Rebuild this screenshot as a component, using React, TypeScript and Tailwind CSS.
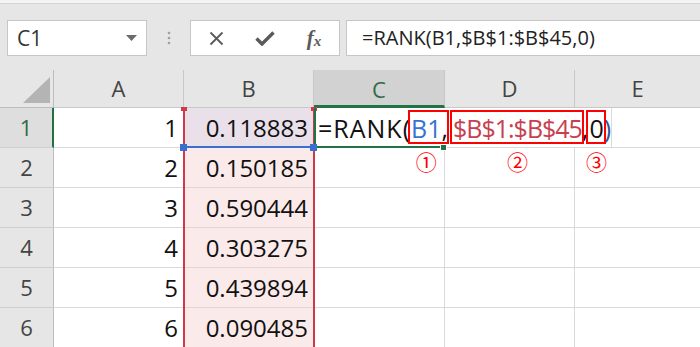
import React from "react";

const body = [
  { n: "2", a: "2", b: "0.150185" },
  { n: "3", a: "3", b: "0.590444" },
  { n: "4", a: "4", b: "0.303275" },
  { n: "5", a: "5", b: "0.439894" },
  { n: "6", a: "6", b: "0.090485" },
];

const Toolbar = () => (
  <div className="mt-[16px] flex h-[36px] items-stretch">
    <div className="ml-[7px] flex w-[140px] items-center justify-between border border-[#c6c6c6] bg-white pl-[9px] pr-[9px]">
      <span className="text-[21px] leading-none text-[#333]">C1</span>
      <svg width="11" height="6" viewBox="0 0 11 6">
        <path d="M0 0h11L5.5 6z" fill="#6b6b6b" />
      </svg>
    </div>
    <div className="flex w-[43px] items-center justify-center">
      <svg width="4" height="14" viewBox="0 0 4 14">
        <circle cx="2" cy="2" r="1.3" fill="#a0a0a0" />
        <circle cx="2" cy="7" r="1.3" fill="#a0a0a0" />
        <circle cx="2" cy="12" r="1.3" fill="#a0a0a0" />
      </svg>
    </div>
    <div className="flex w-[150px] items-center border border-[#c6c6c6] bg-white">
      <div className="flex w-[50px] justify-center">
        <svg width="15" height="15" viewBox="0 0 15 15">
          <path d="M1.5 1.5l12 12M13.5 1.5l-12 12" stroke="#5a5a5a" strokeWidth="1.8" />
        </svg>
      </div>
      <div className="flex w-[48px] justify-center">
        <svg width="20" height="16" viewBox="0 0 20 16">
          <path d="M1.5 8.5l5.5 5.5L18.5 2.5" stroke="#5a5a5a" strokeWidth="3.4" fill="none" />
        </svg>
      </div>
      <div className="flex w-[50px] items-end justify-center font-['Liberation_Serif',serif] italic font-bold text-[#5a5a5a]">
        <span className="text-[21px] leading-none">f</span>
        <span className="text-[15px] leading-none">x</span>
      </div>
    </div>
    <div className="ml-[6px] flex flex-1 items-center border border-r-0 border-[#c6c6c6] bg-white pl-[15px] text-[20px] text-[#222]">
      =RANK(B1,$B$1:$B$45,0)
    </div>
  </div>
);

const Ref = ({
  children,
  mark,
  cls,
  box,
}: {
  children: React.ReactNode;
  mark: string;
  cls: string;
  box: string;
}) => (
  <span className={`relative ${cls}`}>
    {children}
    <span className={`absolute -top-[1px] bottom-[1px] border-2 border-[#ff0000] ${box}`} />
    <span className="absolute left-1/2 top-[40px] -translate-x-1/2 font-['Noto_Sans_CJK_JP',sans-serif] text-[21px] leading-none tracking-normal text-[#ff0000]">
      {mark}
    </span>
  </span>
);

const Grid = () => (
  <div className="relative mt-[14px]">
    {/* column headers */}
    <div className="flex h-[38px] text-[22px] text-[#444]">
      <div className="flex w-[54px] items-end justify-end border-r border-b border-[#bdbdbd] pb-[4px] pr-[3px]">
        <svg width="27" height="26" viewBox="0 0 27 26">
          <path d="M27 0V26H0z" fill="#b4b4b4" />
        </svg>
      </div>
      <div className="flex w-[130px] items-center justify-center border-r border-b border-[#c8c8c8]">A</div>
      <div className="flex w-[130px] items-center justify-center border-r border-b border-[#c8c8c8]">B</div>
      <div className="flex w-[131px] items-center justify-center border-r border-[#c8c8c8] border-b-[3px] border-b-[#217346] bg-[#d2d2d2] pt-[3px] text-[#2e6b46]">
        C
      </div>
      <div className="flex w-[130px] items-center justify-center border-r border-b border-[#c8c8c8]">D</div>
      <div className="flex flex-1 items-center justify-center border-b border-[#c8c8c8]">E</div>
    </div>

    {/* row 1 */}
    <div className="flex h-[40px] text-[24px] text-[#111]">
      <div className="flex w-[54px] items-center justify-center border-r-2 border-r-[#217346] border-b border-b-[#cfcfcf] bg-[#dedede] text-[22px] text-[#2e6b46]">
        1
      </div>
      <div className="flex w-[130px] items-center justify-end border-r border-b border-[#d9d9d9] bg-white pr-[5px]">1</div>
      <div className="flex w-[130px] items-center justify-end border-r border-b border-[#d9d9d9] bg-[#e9e0ea] pr-[5px]">
        0.118883
      </div>
      <div className="flex w-[131px] items-center border-b border-[#d9d9d9] bg-white pl-[4px]">
        <span className="relative z-10 whitespace-nowrap text-[25px] leading-[32px]">
          <span className="tracking-[1px]">=RANK(</span>
          <Ref mark="①" cls="text-[#3a72d3]" box="-left-[3px] -right-[7px]">
            B1
          </Ref>
          ,
          <Ref mark="②" cls="ml-[5px] tracking-[-1px] text-[#c8404f]" box="-left-[3px] -right-[2px]">
            $B$1:$B$45
          </Ref>
          ,
          <Ref mark="③" cls="ml-[1px] text-[#111]" box="-left-[3px] -right-[2px]">
            0
          </Ref>
          <span className="text-[#2f5597]">)</span>
        </span>
      </div>
      <div className="w-[130px] border-b border-[#d9d9d9] bg-white" />
      <div className="flex flex-1 border-b border-[#d9d9d9] bg-white">
        <div className="w-[37px] border-r border-[#d9d9d9]" />
      </div>
    </div>

    {body.map((r) => (
      <div key={r.n} className="flex h-[40px] text-[24px] text-[#111]">
        <div className="flex w-[54px] items-center justify-center border-r border-b border-r-[#bdbdbd] border-b-[#cfcfcf] bg-[#e6e6e6] text-[22px] text-[#444]">
          {r.n}
        </div>
        <div className="flex w-[130px] items-center justify-end border-r border-b border-[#d9d9d9] bg-white pr-[5px]">
          {r.a}
        </div>
        <div className="flex w-[130px] items-center justify-end border-r border-b border-[#e4d4d4] bg-[#fbeaea] pr-[5px]">
          {r.b}
        </div>
        <div className="w-[131px] border-r border-b border-[#d9d9d9] bg-white" />
        <div className="w-[130px] border-r border-b border-[#d9d9d9] bg-white" />
        <div className="flex-1 border-b border-[#d9d9d9] bg-white" />
      </div>
    ))}

    {/* reference range B1:B45 (red) */}
    <div className="absolute left-[183px] top-[38px] bottom-0 w-[2px] bg-[#d0394a]" />
    <div className="absolute left-[313px] top-[38px] bottom-0 w-[2px] bg-[#d0394a]" />
    <div className="absolute left-[181px] top-[37px] h-[4px] w-[6px] bg-[#d0394a]" />
    <div className="absolute left-[311px] top-[37px] h-[4px] w-[6px] bg-[#d0394a]" />
    {/* reference B1 (blue) */}
    <div className="absolute left-[184px] top-[76px] h-[2px] w-[130px] bg-[#3a6fd0]" />
    {/* active cell C1 (green) */}
    <div className="absolute left-[314px] top-[38px] h-[40px] w-[2px] bg-[#217346]" />
    <div className="absolute left-[314px] top-[76px] h-[2px] w-[130px] bg-[#217346]" />
    <div className="absolute left-[440px] top-[74px] h-[7px] w-[7px] border border-white bg-[#217346]" />
    <div className="absolute left-[180px] top-[74px] h-[7px] w-[7px] bg-[#3a6fd0]" />
    <div className="absolute left-[310px] top-[74px] h-[7px] w-[7px] bg-[#3a6fd0]" />
  </div>
);

export default function App() {
  return (
    <div className="relative h-[347px] w-[700px] overflow-hidden bg-[#e6e6e6] font-['Open_Sans',sans-serif] text-[#222]">
      <div className="h-[4px] border-b border-[#d4d4d4] bg-[#f4f4f4]" />
      <Toolbar />
      <Grid />
    </div>
  );
}
